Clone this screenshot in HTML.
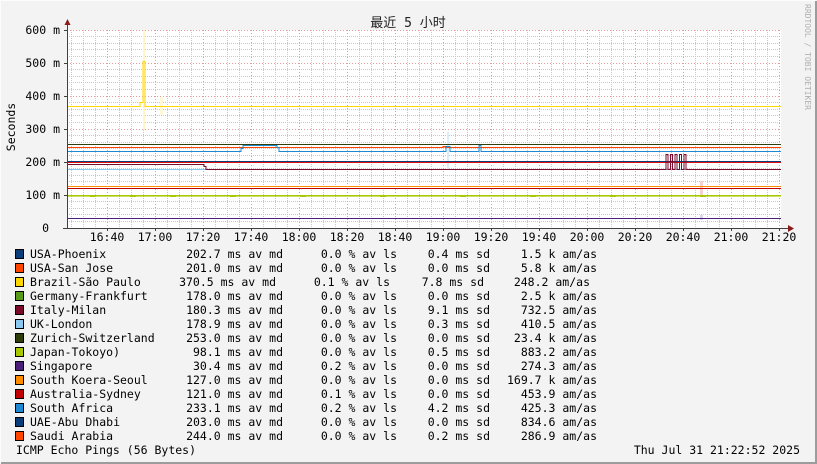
<!DOCTYPE html>
<html><head><meta charset="utf-8"><style>
html,body{margin:0;padding:0;background:#f3f3f3}
svg{display:block}
text{font-family:"DejaVu Sans Mono","Liberation Mono",monospace;font-size:11.5px;fill:#000}
</style></head><body>
<svg width="817" height="464" viewBox="0 0 817 464" xmlns="http://www.w3.org/2000/svg">
<rect x="0" y="0" width="817" height="464" fill="#f3f3f3"/>
<path d="M0.5 463V0.5H816" stroke="#fcfcfc" fill="none"/>
<path d="M1 463H816V1" stroke="#9c9c9c" stroke-width="2" fill="none"/>
<rect x="67" y="30" width="714" height="198" fill="#fff"/>
<g stroke="#c8c8c8" stroke-width="1" stroke-dasharray="1,1">
<path d="M71.5 30V228M83.5 30V228M95.5 30V228M119.5 30V228M131.5 30V228M143.5 30V228M167.5 30V228M179.5 30V228M191.5 30V228M215.5 30V228M227.5 30V228M239.5 30V228M263.5 30V228M275.5 30V228M287.5 30V228M311.5 30V228M323.5 30V228M335.5 30V228M359.5 30V228M371.5 30V228M383.5 30V228M407.5 30V228M419.5 30V228M431.5 30V228M455.5 30V228M467.5 30V228M479.5 30V228M503.5 30V228M515.5 30V228M527.5 30V228M551.5 30V228M563.5 30V228M575.5 30V228M599.5 30V228M611.5 30V228M623.5 30V228M647.5 30V228M659.5 30V228M671.5 30V228M695.5 30V228M707.5 30V228M719.5 30V228M743.5 30V228M755.5 30V228M767.5 30V228"/>
<path d="M67 221.5H781M67 214.5H781M67 208.5H781M67 201.5H781M67 188.5H781M67 181.5H781M67 175.5H781M67 168.5H781M67 155.5H781M67 148.5H781M67 142.5H781M67 135.5H781M67 122.5H781M67 115.5H781M67 109.5H781M67 102.5H781M67 89.5H781M67 82.5H781M67 76.5H781M67 69.5H781M67 56.5H781M67 49.5H781M67 43.5H781M67 36.5H781"/>
</g>
<g stroke="#e59a9a" stroke-width="1" stroke-dasharray="1,2">
<path d="M107.5 30V228M155.5 30V228M203.5 30V228M251.5 30V228M299.5 30V228M347.5 30V228M395.5 30V228M443.5 30V228M491.5 30V228M539.5 30V228M587.5 30V228M635.5 30V228M683.5 30V228M731.5 30V228M779.5 30V228"/>
<path d="M67 195.5H781M67 162.5H781M67 129.5H781M67 96.5H781M67 63.5H781M67 30.5H781"/>
</g>
<rect x="143" y="30" width="2" height="100" fill="#fff5c8"/>
<rect x="160" y="97" width="3" height="18" fill="#fff8d8"/>
<rect x="447" y="132" width="2" height="38" fill="#d8ecf9"/>
<rect x="700" y="181" width="3" height="14" fill="#f5d0d0"/>
<rect x="700" y="215" width="3" height="5" fill="#ddd5ea"/>
<rect x="67" y="195" width="714" height="1.6" fill="#a8c800"/>
<g fill="none" stroke-width="1">
<path d="M67 106.5H140V102.5H143V61.5H145V106.5H781" stroke="#ffd700"/>
<path d="M67 144.5H781" stroke="#2e3d0a"/>
<path d="M67 147.5H443V146.5H445V147.5H781" stroke="#ff4500"/>
<path d="M67 151.5H241V148.5H243V145.5H277V147.5H279V151.5H446V146.5H450V151.5H479V145.5H481V151.5H781" stroke="#1e88d0"/>
<path d="M67 161.5H781" stroke="#0a3d7a"/>
<path d="M67 162.5H781" stroke="#e01010"/>
<path d="M67 169.5H781" stroke="#8ac8f0"/>
<path d="M67 164.5H204V166.5H206V169.5H666V154.5H668V169.5H670.5V154.5H672.5V169.5H675V154.5H677V169.5H679.5V154.5H681.5V169.5H684V154.5H686V169.5H781" stroke="#7a0a2a"/>
<path d="M67 186.5H781" stroke="#ff8c00"/>
<path d="M67 188.5H781" stroke="#c00000"/>
<path d="M90 196.5H95M130 196.5H136M170 196.5H176M230 196.5H236M300 196.5H306M380 196.5H386M460 196.5H466M530 196.5H536M610 196.5H616M700 196.5H706" stroke="#a8c800"/>
<path d="M67 218.5H781" stroke="#4b1e7a"/>
</g>
<path d="M67.5 24V229M63 228.5H790" stroke="#404040" fill="none"/>
<path d="M64.5 25L67.5 19L70.5 25Z" fill="#8b1a1a"/>
<path d="M788 225L794 228.5L788 232Z" fill="#8b1a1a"/>
<g stroke="#404040"><path d="M64 195.5H67M64 162.5H67M64 129.5H67M64 96.5H67M64 63.5H67M64 30.5H67"/>
<path d="M107.5 228V231M155.5 228V231M203.5 228V231M251.5 228V231M299.5 228V231M347.5 228V231M395.5 228V231M443.5 228V231M491.5 228V231M539.5 228V231M587.5 228V231M635.5 228V231M683.5 228V231M731.5 228V231M779.5 228V231"/></g>
<g style="font-size:10px" text-anchor="end">
<text x="60" y="34">600 m</text><text x="60" y="67">500 m</text><text x="60" y="100">400 m</text><text x="60" y="133">300 m</text><text x="60" y="166">200 m</text><text x="60" y="199">100 m</text><text x="49" y="232">0</text>
</g>
<g style="font-size:10px" text-anchor="middle">
<text x="107" y="241">16:40</text><text x="155" y="241">17:00</text><text x="203" y="241">17:20</text><text x="251" y="241">17:40</text><text x="299" y="241">18:00</text><text x="347" y="241">18:20</text><text x="395" y="241">18:40</text><text x="443" y="241">19:00</text><text x="491" y="241">19:20</text><text x="539" y="241">19:40</text><text x="587" y="241">20:00</text><text x="635" y="241">20:20</text><text x="683" y="241">20:40</text><text x="731" y="241">21:00</text><text x="779" y="241">21:20</text>
</g>
<text x="408" y="27" text-anchor="middle" style="font-family:'DejaVu Sans Mono','Noto Sans CJK SC',monospace;font-size:13px;fill:#222" xml:space="preserve">最近 5 小时</text>
<text transform="translate(15,127) rotate(-90)" text-anchor="middle" style="font-size:11.5px">Seconds</text>
<text transform="translate(805,4) rotate(90)" style="font-size:8px;fill:#b0b0b0">RRDTOOL / TOBI OETIKER</text>
<g stroke="#000" stroke-width="1">
<rect x="15.5" y="249.5" width="8" height="9" fill="#0a3d7a"/>
<rect x="15.5" y="263.5" width="8" height="9" fill="#ff4500"/>
<rect x="15.5" y="277.5" width="8" height="9" fill="#ffd700"/>
<rect x="15.5" y="291.5" width="8" height="9" fill="#5a9a1a"/>
<rect x="15.5" y="305.5" width="8" height="9" fill="#7a0a2a"/>
<rect x="15.5" y="319.5" width="8" height="9" fill="#8ac8f0"/>
<rect x="15.5" y="333.5" width="8" height="9" fill="#2e3d0a"/>
<rect x="15.5" y="347.5" width="8" height="9" fill="#a8c800"/>
<rect x="15.5" y="361.5" width="8" height="9" fill="#4b1e7a"/>
<rect x="15.5" y="375.5" width="8" height="9" fill="#ff8c00"/>
<rect x="15.5" y="389.5" width="8" height="9" fill="#c00000"/>
<rect x="15.5" y="403.5" width="8" height="9" fill="#1e88d0"/>
<rect x="15.5" y="417.5" width="8" height="9" fill="#0a3d7a"/>
<rect x="15.5" y="431.5" width="8" height="9" fill="#ff4500"/>
</g>
<g xml:space="preserve">
<text x="30" y="258">USA-Phoenix</text><text x="30" y="272">USA-San Jose</text><text x="30" y="286">Brazil-São Paulo</text><text x="30" y="300">Germany-Frankfurt</text><text x="30" y="314">Italy-Milan</text><text x="30" y="328">UK-London</text><text x="30" y="342">Zurich-Switzerland</text><text x="30" y="356">Japan-Tokoyo)</text><text x="30" y="370">Singapore</text><text x="30" y="384">South Koera-Seoul</text><text x="30" y="398">Australia-Sydney</text><text x="30" y="412">South Africa</text><text x="30" y="426">UAE-Abu Dhabi</text><text x="30" y="440">Saudi Arabia</text>
</g>
<g text-anchor="end" xml:space="preserve">
<text x="283" y="258">202.7 ms av md</text><text x="397" y="258">0.0 % av ls</text><text x="490" y="258">0.4 ms sd</text><text x="597" y="258">1.5 k am/as</text>
<text x="283" y="272">201.0 ms av md</text><text x="397" y="272">0.0 % av ls</text><text x="490" y="272">0.0 ms sd</text><text x="597" y="272">5.8 k am/as</text>
<text x="276" y="286">370.5 ms av md</text><text x="390" y="286">0.1 % av ls</text><text x="484" y="286">7.8 ms sd</text><text x="590" y="286">248.2   am/as</text>
<text x="283" y="300">178.0 ms av md</text><text x="397" y="300">0.0 % av ls</text><text x="490" y="300">0.0 ms sd</text><text x="597" y="300">2.5 k am/as</text>
<text x="283" y="314">180.3 ms av md</text><text x="397" y="314">0.0 % av ls</text><text x="490" y="314">9.1 ms sd</text><text x="597" y="314">732.5   am/as</text>
<text x="283" y="328">178.9 ms av md</text><text x="397" y="328">0.0 % av ls</text><text x="490" y="328">0.3 ms sd</text><text x="597" y="328">410.5   am/as</text>
<text x="283" y="342">253.0 ms av md</text><text x="397" y="342">0.0 % av ls</text><text x="490" y="342">0.0 ms sd</text><text x="597" y="342">23.4 k am/as</text>
<text x="283" y="356">98.1 ms av md</text><text x="397" y="356">0.0 % av ls</text><text x="490" y="356">0.5 ms sd</text><text x="597" y="356">883.2   am/as</text>
<text x="283" y="370">30.4 ms av md</text><text x="397" y="370">0.2 % av ls</text><text x="490" y="370">0.0 ms sd</text><text x="597" y="370">274.3   am/as</text>
<text x="283" y="384">127.0 ms av md</text><text x="397" y="384">0.0 % av ls</text><text x="490" y="384">0.0 ms sd</text><text x="597" y="384">169.7 k am/as</text>
<text x="283" y="398">121.0 ms av md</text><text x="397" y="398">0.1 % av ls</text><text x="490" y="398">0.0 ms sd</text><text x="597" y="398">453.9   am/as</text>
<text x="283" y="412">233.1 ms av md</text><text x="397" y="412">0.2 % av ls</text><text x="490" y="412">4.2 ms sd</text><text x="597" y="412">425.3   am/as</text>
<text x="283" y="426">203.0 ms av md</text><text x="397" y="426">0.0 % av ls</text><text x="490" y="426">0.0 ms sd</text><text x="597" y="426">834.6   am/as</text>
<text x="283" y="440">244.0 ms av md</text><text x="397" y="440">0.0 % av ls</text><text x="490" y="440">0.2 ms sd</text><text x="597" y="440">286.9   am/as</text>
</g>
<text x="16" y="454">ICMP Echo Pings (56 Bytes)</text>
<text x="800" y="454" text-anchor="end">Thu Jul 31 21:22:52 2025</text>
</svg>
</body></html>
